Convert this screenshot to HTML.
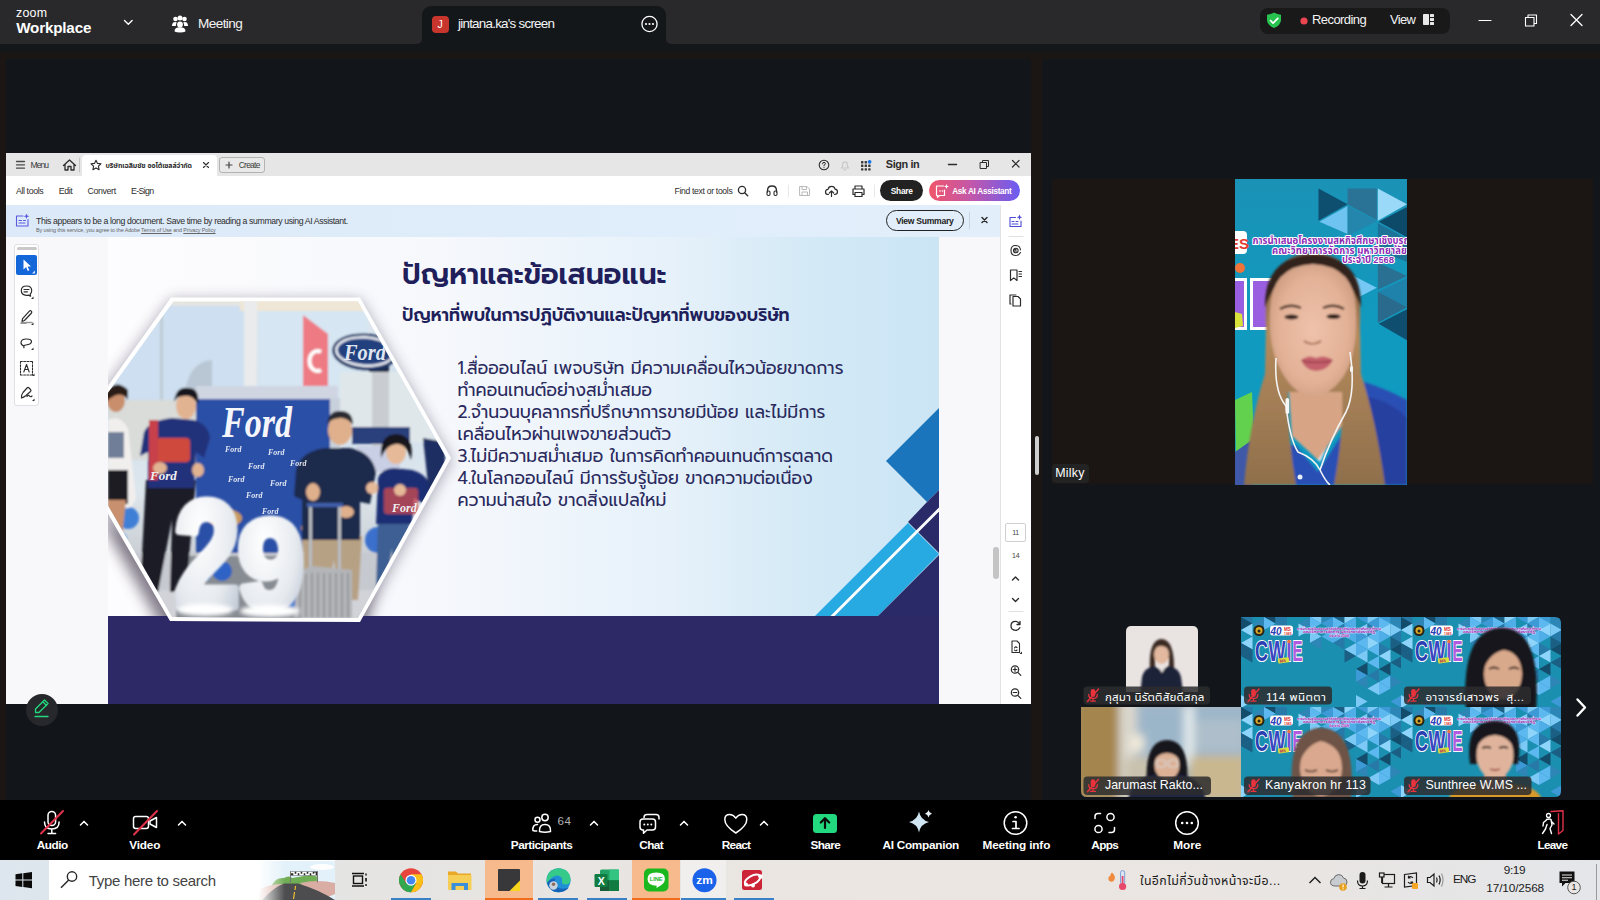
<!DOCTYPE html>
<html lang="th">
<head>
<meta charset="utf-8">
<title>Zoom Workplace</title>
<style>
*{box-sizing:border-box;margin:0;padding:0}
html,body{width:1600px;height:900px;overflow:hidden;background:#12161a}
body{position:relative;font-family:"Liberation Sans","Noto Sans Thai","Loma",sans-serif;color:#fff}
.abs{position:absolute}
.t{position:absolute;white-space:pre;line-height:1}
svg{position:absolute;overflow:visible}
#titlebar{left:0;top:0;width:1600px;height:44px;background:#29292b}
#band{left:0;top:44px;width:1600px;height:16px;background:linear-gradient(#14171a 0,#14171a 7.500px,#191613 9px,#191613 14px,#12161a 16px)}
#frameL{left:0;top:54px;width:6px;height:746px;background:#1b1613}
#frameM{left:1031px;top:54px;width:11px;height:746px;background:#1b1613}
#tab{left:422px;top:6px;width:244px;height:38px;background:#14171a;border-radius:9px 9px 0 0}
#pill{left:1260px;top:8px;width:190px;height:25.500px;background:#19191a;border-radius:8px}
#tile{left:1052px;top:179px;width:541px;height:304.500px;background:#1b1613}
#ztool{left:0;top:800px;width:1600px;height:60px;background:#000}
#taskbar{left:0;top:860px;width:1600px;height:40px;background:linear-gradient(90deg,#dde6ee 0,#e6e4e2 25%,#ebe6e1 55%,#e9e5e2 80%,#e4e6ea 100%)}
#acro{left:6px;top:153px;width:1025px;height:551px;background:#f8f7fa;overflow:hidden;color:#2c2c2c}
#acro .tabrow{left:0;top:0;width:1025px;height:23px;background:#e6e6e6}
#acro .toolrow{left:0;top:23px;width:1025px;height:29px;background:#fff}
#acro .banner{left:0;top:52px;width:994px;height:32px;background:linear-gradient(90deg,#dce9f8,#e2effb)}
#acro .rail{left:994px;top:52px;width:31px;height:499px;background:#fff;border-left:1px solid #e3e3e3}
</style>
</head>
<body>
<div id="titlebar" class="abs"></div>
<div id="band" class="abs"></div>
<div id="frameL" class="abs"></div>
<div id="frameM" class="abs"></div>
<div id="tab" class="abs"></div>
<div id="pill" class="abs"></div>
<div id="tile" class="abs"></div>
<div id="acro" class="abs">
  <div class="abs tabrow"></div>
  <div class="abs toolrow"></div>
  <div class="abs banner"></div>
  <div class="abs rail"></div>
</div>
<svg class="abs" style="left:108px;top:237px" width="831" height="467" viewBox="108 237 831 467">
<defs>
<linearGradient id="sbg" x1="0" x2="1" y1="0" y2="0"><stop offset="0" stop-color="#fdfcfe"/><stop offset=".4" stop-color="#f6f8fc"/><stop offset=".68" stop-color="#e6f1fa"/><stop offset=".85" stop-color="#d3e9f6"/><stop offset="1" stop-color="#cbe5f5"/></linearGradient>
<linearGradient id="sky" x1="0" x2="0" y1="0" y2="1"><stop offset="0" stop-color="#e9e3d6"/><stop offset=".04" stop-color="#dfe6ec"/><stop offset=".3" stop-color="#cfe0ef"/><stop offset=".6" stop-color="#dde6ec"/><stop offset=".8" stop-color="#c9ced4"/><stop offset="1" stop-color="#bcbfc6"/></linearGradient>
<radialGradient id="bal" cx=".4" cy=".35" r=".8"><stop offset="0" stop-color="#ffffff"/><stop offset=".6" stop-color="#e6eaef"/><stop offset="1" stop-color="#b9c2cf"/></radialGradient>
<clipPath id="slideclip"><rect x="108" y="237" width="831" height="467"/></clipPath>
<clipPath id="hexin"><polygon points="173.500,301.500 357.800,301.500 446.400,458 357.800,618 172.300,617 72,443"/></clipPath>
<filter id="b1" x="-20%" y="-20%" width="140%" height="140%"><feGaussianBlur stdDeviation="1.1"/></filter>
<filter id="b2" x="-20%" y="-20%" width="140%" height="140%"><feGaussianBlur stdDeviation="2.2"/></filter>
<filter id="b6" x="-20%" y="-20%" width="140%" height="140%"><feGaussianBlur stdDeviation="7"/></filter>
</defs>
<g clip-path="url(#slideclip)">
<rect x="108" y="237" width="831" height="467" fill="url(#sbg)"/>
<!-- right decorations -->
<polygon points="886,461 939,408 939,490 927,502" fill="#1b75bc"/>
<polygon points="927,502 939,490 939,553 908,522" fill="#2b2a68"/>
<polygon points="815,616 908,523 939,554 878,616" fill="#27a9e1"/>
<polygon points="939,555 939,617 877,617" fill="#2b2a68"/>
<polygon points="830.500,616 939,507.500 939,511.500 834.500,616" fill="#ffffff"/>
<!-- hex shadow -->
<polygon points="171,299 360,299 452,460 361,626 168,626 62,445" fill="#3a3050" opacity=".38" filter="url(#b6)"/>
<polygon points="150,540 382,540 366,634 164,634 100,520" fill="#4a4050" opacity=".5" filter="url(#b6)"/>
<rect x="108" y="616" width="831" height="88" fill="#2c2966"/>
<polygon points="171,297.500 360,297.500 451,458 360,622 170,621 67,443" fill="#ffffff"/>
<g clip-path="url(#hexin)">
<rect x="60" y="297" width="400" height="325" fill="url(#sky)"/>
<g filter="url(#b1)">
<!-- building / windows -->
<rect x="108" y="306" width="136" height="95" fill="#cddff0"/>
<rect x="258" y="311" width="110" height="90" fill="#d6e6f2"/><rect x="240" y="297" width="130" height="14" fill="#efe6d6"/>
<rect x="244" y="300" width="13" height="110" fill="#e9ebec"/>
<rect x="160" y="300" width="3" height="100" fill="#b9c3c9" opacity=".7"/>
<rect x="108" y="400" width="90" height="60" fill="#d9dcd9"/>
<rect x="340" y="372" width="110" height="70" fill="#dfe7ea"/>
<!-- feather flag -->
<path d="M184 402 Q186 362 212 360 L212 402Z" fill="#b9c6d4"/>
<!-- red flag -->
<path d="M303 315 L328 334 L328 392 L303 390Z" fill="#ee7a84"/>
<path d="M321 352 a8 10 0 1 0 0 18" fill="none" stroke="#fff" stroke-width="4"/>
<!-- ford sign -->
<rect x="372" y="366" width="17" height="80" fill="#c9cdd2"/>
<rect x="369" y="366" width="20" height="6" fill="#1c2c4c"/><ellipse cx="365" cy="352" rx="33" ry="18.500" fill="#1e3768" transform="rotate(4 365 352)"/><ellipse cx="365" cy="351.500" rx="30" ry="15.500" fill="#eef2f8" transform="rotate(4 365 352)"/>
<ellipse cx="365" cy="351.500" rx="27.500" ry="13" fill="#213f7d" transform="rotate(4 365 352)"/>
<!-- backdrop -->
<rect x="196" y="392" width="142" height="162" fill="#2a4fa6"/>
<rect x="196" y="386" width="142" height="13" fill="#cfd6e2"/>
<rect x="330" y="398" width="10" height="60" fill="#c8d0dc"/>
<!-- floor -->
<rect x="108" y="553" width="340" height="70" fill="#c6c9cf"/>
<rect x="108" y="590" width="340" height="30" fill="#d2d3d8"/><rect x="176" y="556" width="126" height="64" fill="#878c93"/>
<!-- chairs -->
<ellipse cx="225" cy="518" rx="17" ry="9" fill="#c99a5e"/>
<ellipse cx="318" cy="528" rx="17" ry="9" fill="#c99a5e"/>
<!-- blue balloons -->
<circle cx="128" cy="518" r="11" fill="#3f7fd6"/><circle cx="118" cy="540" r="9" fill="#5b9be6"/>
<circle cx="222" cy="571" r="10" fill="#2f62c4"/><circle cx="204" cy="574" r="7" fill="#3f7fd6"/>
<circle cx="378" cy="540" r="13" fill="#3a70cc"/><circle cx="293" cy="600" r="8" fill="#3a70cc"/>
<!-- woman left -->
<path d="M108 420 q12 -6 20 8 l8 70 q-4 12 -12 10 l-6 40 l-10 -4Z" fill="#f1efee"/>
<rect x="108" y="470" width="20" height="34" fill="#1d1d24"/>
<rect x="108" y="432" width="16" height="26" fill="#6f7f97"/>
<path d="M108 500 l18 0 l-6 56 l-12 -6z" fill="#c8906e"/>
<ellipse cx="116" cy="400" rx="9" ry="12" fill="#c98e6c"/>
<path d="M106 392 q10 -14 22 -2 l0 10 q-8 -12 -22 2z" fill="#2a1b16"/>
<!-- man 1 -->
<path d="M140 592 L146 480 L196 480 L186 592 L170 592 L172 520 L158 592Z" fill="#1c1e26"/>
<path d="M144 432 q6 -12 28 -14 l22 2 q14 4 16 18 l-6 20 l-8 -6 l-2 36 l-46 0 l0 -36 l-8 4z" fill="#22307a"/>
<rect x="156" y="438" width="34" height="24" rx="4" fill="#cf4a3c"/>
<rect x="149" y="420" width="9" height="60" fill="#c8404a"/>
<ellipse cx="186" cy="406" rx="10" ry="13" fill="#e2b391"/>
<path d="M174 402 q2 -16 14 -14 q12 0 10 16 q-6 -10 -14 -8 q-8 0 -10 6z" fill="#15131a"/>
<ellipse cx="160" cy="468" rx="7" ry="6" fill="#e2b391"/><ellipse cx="198" cy="470" rx="6" ry="7" fill="#e2b391"/>
<rect x="352" y="427" width="58" height="17" fill="#2a3f7c"/><rect x="356" y="446" width="44" height="26" fill="#c9cfe4"/>
<!-- man 2 -->
<path d="M300 600 L302 536 L362 536 L358 600 L338 600 L334 560 L326 600Z" fill="#b7a184"/>
<path d="M296 470 q4 -18 28 -22 l26 0 q22 4 26 24 l-6 32 l-10 -2 l0 38 l-58 0 l0 -40 l-8 -4z" fill="#1f2a4c"/>
<ellipse cx="340" cy="430" rx="12" ry="15" fill="#e0b08c"/>
<path d="M327 424 q2 -14 14 -13 q12 0 12 14 q-6 -8 -13 -7 q-8 0 -13 6z" fill="#2a2a30"/>
<ellipse cx="313" cy="492" rx="7" ry="9" fill="#e0b08c"/><ellipse cx="346" cy="512" rx="8" ry="6" fill="#e0b08c"/>
<!-- woman right -->
<path d="M376 590 L378 520 L410 520 L404 590 L394 590 L392 548 L386 590Z" fill="#3c5f93"/>
<path d="M378 478 q4 -10 16 -10 l18 2 q16 4 20 20 l-8 14 l-10 -6 l-2 26 l-36 0z" fill="#1f2f73"/>
<rect x="384" y="488" width="34" height="26" rx="3" fill="#c74a52" opacity=".8"/>
<ellipse cx="396" cy="452" rx="10" ry="12" fill="#e6b999"/>
<path d="M381 458 q-2 -24 16 -24 q18 2 14 26 q-4 -16 -14 -16 q-10 0 -16 14z" fill="#15131a"/>
<ellipse cx="372" cy="488" rx="6" ry="6" fill="#e6b999"/><ellipse cx="400" cy="490" rx="6" ry="6" fill="#e6b999"/>
<!-- dark vertical at right of woman -->
<path d="M423 438 l22 4 l0 42 l-16 10z" fill="#1e2e62"/>
<!-- suitcase -->
<rect x="309" y="505" width="3" height="64" fill="#b8bcc2"/><rect x="338" y="505" width="3" height="64" fill="#b8bcc2"/><rect x="307" y="503" width="36" height="4" fill="#3f5fa8"/>
<path d="M297 572 L312 566 L352 570 L352 618 L294 618Z" fill="#b4b5b8"/>
<path d="M300 575v42M306 574v44M312 573v45M318 573v45M324 573v45M330 573v45M336 573v45M342 573v45M348 573v45" stroke="#8f9196" stroke-width="1.600" fill="none"/>
</g>
<!-- balloon numbers as real text -->
<g filter="url(#b1)" font-family="'Liberation Sans',sans-serif" font-weight="700" font-size="150" fill="url(#bal)" stroke="url(#bal)" stroke-width="9" stroke-linejoin="round" stroke-linecap="round">
<text x="174" y="606" textLength="66" lengthAdjust="spacingAndGlyphs">2</text>
<text x="238" y="607" textLength="66" lengthAdjust="spacingAndGlyphs" font-size="124">9</text>
</g>
<g filter="url(#b2)" fill="#fff"><ellipse cx="205" cy="610" rx="28" ry="6"/><ellipse cx="270" cy="611" rx="30" ry="6"/></g>
<!-- Ford logos text -->
<g font-family="'Liberation Serif',serif" font-style="italic" font-weight="700" fill="#f4f6fb">
<text x="222" y="437" font-size="44" textLength="70" lengthAdjust="spacingAndGlyphs">Ford</text>
<text x="344" y="360" font-size="24" textLength="42" lengthAdjust="spacingAndGlyphs" fill="#dfe5f0">Ford</text>
<g font-size="8" opacity=".9"><text x="225" y="452">Ford</text><text x="268" y="455">Ford</text><text x="248" y="469">Ford</text><text x="290" y="466">Ford</text><text x="228" y="482">Ford</text><text x="270" y="486">Ford</text><text x="246" y="498">Ford</text><text x="262" y="514">Ford</text></g>
<text x="150" y="480" font-size="13" fill="#f0f0f4">Ford</text>
<text x="392" y="512" font-size="12" fill="#f0f0f4">Ford</text>
</g>
</g>
<!-- slide text -->
<g font-family="'Prompt','Liberation Sans','Kanit','Noto Sans Thai','Loma',sans-serif" fill="#22215c">
<text x="402" y="283.500" font-size="28.500" font-weight="600" fill="#201f5b">ปัญหาและข้อเสนอแนะ</text>
<text x="402" y="320.500" font-size="17.340" font-weight="600" fill="#201f5b">ปัญหาที่พบในการปฏิบัติงานและปัญหาที่พบของบริษัท</text>
<g font-size="17.300" fill="#2a2a5e">
<text x="457.500" y="373.500">1.สื่อออนไลน์ เพจบริษัท มีความเคลื่อนไหวน้อยขาดการ</text>
<text x="457.500" y="395.500">ทำคอนเทนต์อย่างสม่ำเสมอ</text>
<text x="457.500" y="417.500">2.จำนวนบุคลากรที่ปรึกษาการขายมีน้อย และไม่มีการ</text>
<text x="457.500" y="439.500">เคลื่อนไหวผ่านเพจขายส่วนตัว</text>
<text x="457.500" y="461.500">3.ไม่มีความสม่ำเสมอ ในการคิดทำคอนเทนต์การตลาด</text>
<text x="457.500" y="483.500">4.ในโลกออนไลน์ มีการรับรู้น้อย ขาดความต่อเนื่อง</text>
<text x="457.500" y="505.500">ความน่าสนใจ ขาดสิ่งแปลใหม่</text>
</g>
</g>
</g>
</svg>

<!-- acrobat chrome: coordinates are absolute page coords via svg at 0,0 -->
<div class="abs" style="left:82px;top:155px;width:135px;height:21px;background:#fff;border-radius:4px 4px 0 0"></div>
<div class="abs" style="left:219px;top:157px;width:46px;height:16px;border:1px solid #b3b3b3;border-radius:3px;background:#e9e9e9"></div>
<div class="abs" style="left:880px;top:180px;width:43px;height:21px;border-radius:11px;background:#222"></div>
<div class="abs" style="left:929px;top:180px;width:91px;height:21px;border-radius:11px;background:linear-gradient(90deg,#f0566a 0,#c457a8 45%,#6a5cf2 100%)"></div>
<div class="abs" style="left:886px;top:210px;width:78px;height:21px;border-radius:11px;border:1.5px solid #222"></div>
<div class="abs" style="left:14px;top:244px;width:25px;height:162px;border:1px solid #e1dfe4;border-radius:3px;background:#fff"></div>
<div class="abs" style="left:17px;top:247px;width:20px;height:3px;border-radius:2px;background:#c9c9c9"></div>
<div class="abs" style="left:16px;top:255px;width:21px;height:20px;border-radius:2px;background:#1467d9"></div>
<div class="abs" style="left:993px;top:547px;width:6px;height:32px;border-radius:3px;background:#c4c4c4"></div>
<div class="abs" style="left:1005px;top:523px;width:21px;height:19px;border:1px solid #cfcfcf;border-radius:2px;background:#fff"></div>
<div class="abs" style="left:1035px;top:436px;width:4px;height:39px;border-radius:2px;background:#cfcfcf"></div>
<svg class="abs" style="left:0;top:0" width="1600" height="900" viewBox="0 0 1600 900" fill="none" stroke="#2c2c2c" stroke-width="1.200" stroke-linecap="round" stroke-linejoin="round">
<!-- hamburger -->
<path d="M16.500 161.500h8M16.500 164.800h8M16.500 168.200h8" stroke="#4a4a4a" stroke-width="1.300"/>
<!-- home -->
<path d="M63.500 165.500 L69.500 160 L75.500 165.500 M65 164.500 V170 H68 V166.500 H71 V170 H74 V164.500" stroke-width="1.300"/>
<path d="M79.500 158v14" stroke="#c4c4c4" stroke-width="1"/>
<!-- star -->
<path d="M96 160.200l1.500 3.200 3.500.4-2.600 2.400.7 3.500-3.100-1.800-3.100 1.800.7-3.500-2.600-2.400 3.500-.4z" stroke-width="1.100"/>
<!-- tab close -->
<path d="M203.500 162.500l5 5M208.500 162.500l-5 5" stroke-width="1.100"/>
<!-- plus -->
<path d="M226 165h6M229 162v6" stroke="#444" stroke-width="1.200"/>
<!-- help -->
<circle cx="824" cy="165" r="4.800" stroke-width="1.100"/><path d="M822.600 163.800q0-1.500 1.400-1.500t1.400 1.400q0 .9-1.400 1.500v.6M824 167.600v.2" stroke-width="1"/>
<!-- bell (disabled) -->
<path d="M841.500 168q1.200-1 1.200-3.500 0-2.700 2.300-2.700t2.300 2.700q0 2.500 1.200 3.500zM844 169.600q1 .8 2 0" stroke="#c8c8c8"/>
<!-- grid -->
<g fill="#3a3a3a" stroke="none"><rect x="861" y="161" width="2.400" height="2.400" rx=".5"/><rect x="864.600" y="161" width="2.400" height="2.400" rx=".5"/><rect x="861" y="164.600" width="2.400" height="2.400" rx=".5"/><rect x="864.600" y="164.600" width="2.400" height="2.400" rx=".5"/><rect x="868.200" y="164.600" width="2.400" height="2.400" rx=".5"/><rect x="861" y="168.200" width="2.400" height="2.400" rx=".5"/><rect x="864.600" y="168.200" width="2.400" height="2.400" rx=".5"/><rect x="868.200" y="168.200" width="2.400" height="2.400" rx=".5"/><circle cx="869.600" cy="161.800" r="1.900" fill="#1473e6"/></g>
<!-- window controls -->
<path d="M948.500 164.500h8" stroke-width="1.500"/>
<path d="M980.500 162.500h6v6h-6zM982.500 162.500v-2h6v6h-2" stroke-width="1"/>
<path d="M1012.500 160.500l6.500 6.500M1019 160.500l-6.500 6.500" stroke-width="1.200"/>
<!-- search -->
<circle cx="742" cy="190" r="3.600" stroke-width="1.300"/><path d="M744.700 192.700l3 3" stroke-width="1.400"/>
<!-- headphones -->
<path d="M767.500 192v-1.500q0-4.500 4.500-4.500t4.500 4.500v1.500" stroke-width="1.300"/><rect x="767" y="191" width="3" height="4.500" rx="1.200" stroke-width="1.100"/><rect x="774" y="191" width="3" height="4.500" rx="1.200" stroke-width="1.100"/>
<path d="M788.500 185v12M874.500 185v12" stroke="#e8e8e8" stroke-width="1"/>
<!-- save (disabled) -->
<path d="M800 186.500h7l2.500 2.500v6.500h-9.500zM802 186.500v3h4.500v-3M802 195.500v-3.500h5.500v3.500" stroke="#b9b9b9" stroke-width="1"/>
<!-- cloud upload -->
<path d="M828.500 194.500q-3 0-3-2.600 0-2.400 2.500-2.600.6-3 3.600-3 2.800 0 3.400 2.800 2.500.3 2.500 2.700 0 2.700-3 2.700M831.500 196.500v-5.500M829.300 193l2.200-2.200 2.200 2.200" stroke-width="1.200"/>
<!-- print -->
<path d="M855 189v-3h7v3M855 194.500h-2v-5.500h11v5.500h-2M855 192.500h7v4h-7z" stroke-width="1.200"/>
<!-- AI assistant icon in button -->
<path d="M937 186h6.500M944.500 190v5.500h-5l-2 1.800v-1.800h-1v-9.500" stroke="#fff" stroke-width="1.200"/><path d="M946.500 184l.7 1.800 1.800.7-1.800.7-.7 1.800-.7-1.800-1.800-.7 1.800-.7z" fill="#fff" stroke="none"/><circle cx="940" cy="191" r=".8" fill="#fff" stroke="none"/><circle cx="942.500" cy="191" r=".8" fill="#fff" stroke="none"/>
<!-- banner icon -->
<g stroke="#5b5be0" stroke-width="1.100"><path d="M17 216h6M28 219.500v6.500h-11.500v-10M19 220.500h2.500M19 223h6M23.500 220.500h2"/><path d="M26.500 213.500l.8 2 2 .8-2 .8-.8 2-.8-2-2-.8 2-.8z" fill="#5b5be0" stroke="none"/></g>
<!-- banner separator and close -->
<path d="M969.500 212v17" stroke="#c9d4e0" stroke-width="1"/>
<path d="M982 217.500l5 5M987 217.500l-5 5" stroke-width="1.500"/>
<!-- left tools -->
<path d="M23.500 259.500v10l2.600-2.400 1.700 3.800 1.500-.7-1.700-3.700h3.400z" fill="#fff" stroke="none"/><path d="M35 270.500v3h-3z" fill="#fff" stroke="none" opacity=".85"/>
<path d="M26.500 286q5.200 0 5.200 4.600 0 2.300-1.500 3.500l.4 2-2.300-1q-.9.200-1.800.2-5.200 0-5.200-4.700 0-4.600 5.200-4.600zM24 289.500h5M24 291.800h3.500" stroke-width="1.200"/>
<path d="M22 321.500l2.500-1 7-7.500q.8-1-.2-1.900t-1.900.1l-6.800 7.500zM21 323h5" stroke-width="1.200"/><path d="M26 322.500h6" stroke="#999" stroke-width="1.600"/>
<path d="M24 346q-3-1-3-3.300 0-3.700 5.500-3.700 5 0 5 2.600 0 2.900-5.600 3.400-2.900.3-1.900 2.800" stroke-width="1.200"/>
<path d="M20.500 361.500h12M20.500 375h12M20.500 361.500v13.500M32.500 361.500v13.500" stroke-dasharray="1.800 1.400" stroke-width="1.100"/><path d="M23.800 372l2.700-7.500 2.700 7.500M24.800 369.500h3.400" stroke-width="1.100"/>
<path d="M21.500 398q-.5-3 1.500-5.500l4-4.500q1-1 2 0l1.500 1.500q1 1 0 2l-4.500 4q-2.500 2-4.500 2.500zM27 396.500q1.500-2 2.500-.5t2.500 0" stroke-width="1.200"/>
<g fill="#2c2c2c" stroke="none"><path d="M33.500 296.500v2.500h-2.500zM33.500 322.500v2.500h-2.500zM33.500 347.500v2.500h-2.500zM34.500 373.500v2.500h-2.500zM34.500 398.500v2.500h-2.500z"/></g>
<!-- right rail icons -->
<g stroke="#4b4bd8" stroke-width="1.100"><path d="M1010 217.500h5.500M1021 221v5.500h-11v-9M1012 221.500h2M1012 224h6M1016 221.500h2"/><path d="M1019.500 214.500l.8 1.900 1.900.8-1.900.8-.8 1.900-.8-1.900-1.900-.8 1.900-.8z" fill="#4b4bd8" stroke="none"/></g>
<path d="M1009 236.500h14M1009 611.500h14" stroke="#e0e0e0" stroke-width="1"/>
<path d="M1020.500 252.500q-1.500 3-5 3-4.500 0-4.500-5t4.500-5q4.500 0 5 4.500M1013.500 250.500q0-2.300 2.300-2.300t2.300 2.300-2.300 2.300-2.300-2.300M1016 249.500h-1v1.500h1.500" stroke-width="1.100"/>
<path d="M1010.500 270h6.500v10.500l-3.200-2.600-3.300 2.600zM1019 271.500h2.500M1019 274h2.500M1019 276.500h2.500" stroke-width="1.200"/>
<path d="M1013 296.500h5l2.500 2.500v7h-7.500zM1011 304h-1v-9h6" stroke-width="1.200"/>
<path d="M1012.500 580l3-3 3 3M1012.500 598.500l3 3 3-3" stroke-width="1.400"/>
<path d="M1020 621.500v3h-3M1019.800 624.300q-1.500-3-4.300-3-4.500 0-4.500 4.500t4.500 4.500q3 0 4.300-2.600" stroke-width="1.300"/>
<path d="M1012 641h5l2.500 2.500v9h-7.500zM1014.500 648q1-2 2.500-.5M1017 650q-1.500 1.500-2.500 0" stroke-width="1.100"/><path d="M1022 651.500v2.500h-2.500z" fill="#2c2c2c" stroke="none"/>
<circle cx="1015" cy="669.500" r="3.700" stroke-width="1.200"/><path d="M1017.800 672.300l3 3M1013.200 669.500h3.600M1015 667.700v3.600" stroke-width="1.200"/>
<circle cx="1015" cy="692.500" r="3.700" stroke-width="1.200"/><path d="M1017.800 695.300l3 3M1013.200 692.500h3.600" stroke-width="1.200"/>
</svg>

<svg class="abs" style="left:1235px;top:179px" width="172" height="306" viewBox="1235 179 172 306">
<defs>
<clipPath id="spclip"><rect x="1235" y="179" width="172" height="306"/></clipPath>
<linearGradient id="spbg" x1="0" x2="0" y1="0" y2="1"><stop offset="0" stop-color="#1a92b6"/><stop offset=".5" stop-color="#119abf"/><stop offset="1" stop-color="#0d9ac2"/></linearGradient>
<linearGradient id="hairL" x1="0" x2="0" y1="0" y2="1"><stop offset="0" stop-color="#6b4a34"/><stop offset=".35" stop-color="#b48a5c"/><stop offset="1" stop-color="#8f6f4c"/></linearGradient>
<radialGradient id="face" cx=".5" cy=".5" r=".62"><stop offset="0" stop-color="#efc2ab"/><stop offset=".65" stop-color="#e2b196"/><stop offset="1" stop-color="#c8967a"/></radialGradient>
<filter id="sb1" x="-20%" y="-20%" width="140%" height="140%"><feGaussianBlur stdDeviation="1.200"/></filter>
<filter id="sb3" x="-20%" y="-20%" width="140%" height="140%"><feGaussianBlur stdDeviation="3"/></filter>
</defs>
<g clip-path="url(#spclip)">
<rect x="1235" y="179" width="172" height="306" fill="url(#spbg)"/>
<!-- triangle pattern top right -->
<g>
<polygon points="1318.500,188.600 1347.600,204.200 1318.500,220.700" fill="#0e4f70"/>
<polygon points="1319.400,221.700 1347.600,206.100 1347.600,234" fill="#6ec3f0"/>
<polygon points="1347.600,188.600 1376.800,188.600 1376.800,220 1347.600,204.500" fill="#2b7396"/>
<polygon points="1347.600,206 1376.800,221 1347.600,236" fill="#2485ad"/>
<polygon points="1377.800,188.600 1407,204.200 1377.800,220.700" fill="#9adaf8"/>
<polygon points="1407,207 1378.700,221.700 1407,237.200" fill="#0d4a6a"/>
<polygon points="1377.800,223 1407,239 1407,262 1377.800,250" fill="#1c7397"/>
<polygon points="1348.600,273.200 1376.800,287.800 1348.600,302.400" fill="#74c8f3"/>
<polygon points="1377.800,262.500 1407,276.100 1377.800,289.700" fill="#2a7093"/>
<polygon points="1407,278 1377.800,291.700 1407,307.200" fill="#1f82ab"/>
<polygon points="1377.800,291.700 1407,307.200 1377.800,322.800" fill="#2a6a8c"/>
<polygon points="1407,309.200 1378.700,323.700 1407,340.300" fill="#0f4e6e"/>
</g>
<!-- left partial graphics -->
<rect x="1226" y="231" width="21" height="23" rx="4" fill="#fff"/>
<circle cx="1240" cy="268" r="5" fill="#f0743a"/>
<rect x="1228" y="278" width="19" height="52" fill="#fff"/><rect x="1228" y="281" width="16" height="46" fill="#9a5fe0"/>
<rect x="1250" y="278" width="22" height="52" fill="#fff"/><rect x="1253" y="281" width="17" height="46" fill="#9a5fe0"/>
<path d="M1235 312l7 2 1 12-8 2z" fill="#d8e23a"/>
<!-- green cloth -->
<path d="M1235 400 L1252 392 L1254 440 L1236 456 Z" fill="#62d24e"/>
<path d="M1235 452 L1252 440 L1252 485 L1235 485Z" fill="#3f58a8"/>
<!-- shirt -->
<g filter="url(#sb1)">
<path d="M1358 380 Q1385 388 1407 400 L1407 485 L1262 485 L1272 440 L1296 446 L1318 472 L1346 428Z" fill="#2c50b4"/>
<path d="M1366 396 Q1392 402 1407 418 L1407 485 L1384 485Z" fill="#2840a0"/>
<path d="M1330 424 L1336 428 L1320 462 L1316 458Z" fill="#eef0f6"/>
<!-- neck / chest -->
<path d="M1288 376 L1346 376 L1346 420 L1318 460 L1292 436 Z" fill="#d7a585"/>
<!-- hair -->
<path d="M1266 326 Q1262 254 1313 253 Q1364 254 1360 326 L1361 374 Q1376 420 1385 485 L1334 485 Q1344 430 1342 392 L1288 392 Q1288 440 1296 485 L1244 485 Q1250 420 1265 374Z" fill="url(#hairL)"/>
<path d="M1265 308 Q1264 256 1313 255 Q1362 256 1361 308 Q1348 268 1313 268 Q1278 268 1265 308Z" fill="#33241d"/>
<!-- face -->
<path d="M1270 310 Q1271 266 1313 264 Q1355 266 1356 310 Q1358 350 1345 374 Q1331 396 1313 396 Q1296 396 1283 374 Q1268 350 1270 310Z" fill="url(#face)"/>
<!-- brows / eyes -->
<path d="M1280 309q10-6 21-1" stroke="#4a3328" stroke-width="2.400" fill="none"/><path d="M1323 308q11-5 21 1" stroke="#4a3328" stroke-width="2.400" fill="none"/>
<ellipse cx="1291.500" cy="317" rx="7" ry="2.600" fill="#33221c"/><ellipse cx="1333.500" cy="316.500" rx="7" ry="2.600" fill="#33221c"/>
<!-- nose -->
<path d="M1304 341q8 6 17 0" stroke="#b07c62" stroke-width="2.200" fill="none"/>
<!-- lips -->
<path d="M1301 360q8-6 15-2 8-4 17 2-6 11-17 11-10 0-15-11z" fill="#c4606c"/>
<path d="M1302 361q15 3 30 0" stroke="#9c3f4c" stroke-width="1.300" fill="none"/>
</g>
<!-- earphone wires -->
<path d="M1276 358 Q1274 392 1286 406 Q1290 440 1298 452 Q1314 458 1320 470 Q1326 482 1330 485" stroke="#f4f4f4" stroke-width="1.600" fill="none"/>
<path d="M1350 352 Q1356 392 1346 412 Q1330 440 1320 470" stroke="#f4f4f4" stroke-width="1.600" fill="none"/>
<rect x="1285.500" y="398" width="3.600" height="16" rx="1.800" fill="#f7f7f7"/>
<rect x="1350" y="366" width="3" height="6" rx="1.500" fill="#f4f4f4"/>
<circle cx="1300" cy="477" r="2.500" fill="#e8eef8"/>
<!-- banner thai text -->
<g font-family="'Liberation Sans','Noto Sans Thai','Loma',sans-serif" font-weight="700" font-size="9.600" fill="#8e2bb4" stroke="#fff" stroke-width="2" paint-order="stroke" stroke-linejoin="round">
<text x="1252.500" y="243.500" textLength="160" lengthAdjust="spacing">การนำเสนอโครงงานสหกิจศึกษาเชิงบูรณ</text>
<text x="1272" y="253.500" textLength="140" lengthAdjust="spacing">คณะวิทยาการจัดการ  มหาวิทยาลัยร</text>
<text x="1342" y="263.300" textLength="52" lengthAdjust="spacing">ประจำปี 2568</text>
</g>
<text x="1229" y="249" font-family="'Liberation Sans',sans-serif" font-weight="700" font-size="15" fill="#e23a2e">ES</text>
</g>
</svg>
<div class="abs" style="left:1052px;top:464px;width:37px;height:19px;border-radius:4px;background:rgba(38,38,40,.85)"></div>

<svg class="abs" style="left:0;top:0" width="1600" height="900" viewBox="0 0 1600 900" font-family="'Liberation Sans','Noto Sans Thai','Loma',sans-serif">
<defs><clipPath id="cwclip"><rect width="160" height="90"/></clipPath><g id="cwbg" clip-path="url(#cwclip)"><rect width="160" height="90" fill="#1a8fb0"/><polygon points="11.5,-6.5 0,0 11.5,6.5" fill="#2779a8"/><polygon points="0,0 11.5,6.5 0,13" fill="#144d6b"/><polygon points="11.5,6.5 0,13 11.5,19.5" fill="#8fd4fa"/><polygon points="11.5,19.5 0,26 11.5,32.5" fill="#8fd4fa"/><polygon points="0,26 11.5,32.5 0,39" fill="#1b5f84"/><polygon points="11.5,32.5 0,39 11.5,45.5" fill="#1b5f84"/><polygon points="0,78 11.5,84.5 0,91" fill="#8fd4fa"/><polygon points="23,0 11.5,6.5 23,13" fill="#2e86b6"/><polygon points="34.5,-6.5 23,0 34.5,6.5" fill="#144d6b"/><polygon points="23,0 34.5,6.5 23,13" fill="#5db8f0"/><polygon points="23,78 34.5,84.5 23,91" fill="#2e86b6"/><polygon points="34.5,-6.5 46,0 34.5,6.5" fill="#2779a8"/><polygon points="46,0 34.5,6.5 46,13" fill="#2779a8"/><polygon points="69,0 57.5,6.5 69,13" fill="#2e86b6"/><polygon points="57.5,6.5 69,13 57.5,19.5" fill="#8fd4fa"/><polygon points="80.5,-6.5 69,0 80.5,6.5" fill="#7cc9f6"/><polygon points="69,0 80.5,6.5 69,13" fill="#5db8f0"/><polygon points="69,13 80.5,19.5 69,26" fill="#7cc9f6"/><polygon points="80.5,19.5 69,26 80.5,32.5" fill="#2e86b6"/><polygon points="80.5,-6.5 92,0 80.5,6.5" fill="#2e86b6"/><polygon points="92,0 80.5,6.5 92,13" fill="#3d9ad6"/><polygon points="92,13 80.5,19.5 92,26" fill="#4faee8"/><polygon points="103.5,-6.5 92,0 103.5,6.5" fill="#1b5f84"/><polygon points="92,0 103.5,6.5 92,13" fill="#5db8f0"/><polygon points="103.5,6.5 92,13 103.5,19.5" fill="#2779a8"/><polygon points="92,13 103.5,19.5 92,26" fill="#4faee8"/><polygon points="103.5,19.5 92,26 103.5,32.5" fill="#2779a8"/><polygon points="103.5,-6.5 115,0 103.5,6.5" fill="#8fd4fa"/><polygon points="115,0 103.5,6.5 115,13" fill="#4faee8"/><polygon points="103.5,6.5 115,13 103.5,19.5" fill="#4faee8"/><polygon points="115,13 103.5,19.5 115,26" fill="#4faee8"/><polygon points="115,26 103.5,32.5 115,39" fill="#7cc9f6"/><polygon points="103.5,32.5 115,39 103.5,45.5" fill="#1b5f84"/><polygon points="126.5,-6.5 115,0 126.5,6.5" fill="#3d9ad6"/><polygon points="126.5,6.5 115,13 126.5,19.5" fill="#7cc9f6"/><polygon points="115,13 126.5,19.5 115,26" fill="#3d9ad6"/><polygon points="126.5,19.5 115,26 126.5,32.5" fill="#5db8f0"/><polygon points="115,26 126.5,32.5 115,39" fill="#4faee8"/><polygon points="126.5,32.5 115,39 126.5,45.5" fill="#7cc9f6"/><polygon points="126.5,45.5 115,52 126.5,58.5" fill="#144d6b"/><polygon points="115,52 126.5,58.5 115,65" fill="#3d9ad6"/><polygon points="126.5,58.5 115,65 126.5,71.5" fill="#2e86b6"/><polygon points="115,78 126.5,84.5 115,91" fill="#7cc9f6"/><polygon points="126.5,-6.5 138,0 126.5,6.5" fill="#7cc9f6"/><polygon points="138,0 126.5,6.5 138,13" fill="#3d9ad6"/><polygon points="126.5,6.5 138,13 126.5,19.5" fill="#2779a8"/><polygon points="138,13 126.5,19.5 138,26" fill="#5db8f0"/><polygon points="126.5,19.5 138,26 126.5,32.5" fill="#8fd4fa"/><polygon points="138,26 126.5,32.5 138,39" fill="#5db8f0"/><polygon points="138,39 126.5,45.5 138,52" fill="#5db8f0"/><polygon points="138,52 126.5,58.5 138,65" fill="#2779a8"/><polygon points="138,65 126.5,71.5 138,78" fill="#7cc9f6"/><polygon points="149.5,-6.5 138,0 149.5,6.5" fill="#3d9ad6"/><polygon points="138,0 149.5,6.5 138,13" fill="#5db8f0"/><polygon points="149.5,6.5 138,13 149.5,19.5" fill="#8fd4fa"/><polygon points="138,13 149.5,19.5 138,26" fill="#4faee8"/><polygon points="138,26 149.5,32.5 138,39" fill="#2779a8"/><polygon points="149.5,32.5 138,39 149.5,45.5" fill="#8fd4fa"/><polygon points="149.5,45.5 138,52 149.5,58.5" fill="#144d6b"/><polygon points="149.5,58.5 138,65 149.5,71.5" fill="#5db8f0"/><polygon points="138,65 149.5,71.5 138,78" fill="#5db8f0"/><polygon points="149.5,-6.5 161,0 149.5,6.5" fill="#2e86b6"/><polygon points="161,0 149.5,6.5 161,13" fill="#2e86b6"/><polygon points="149.5,6.5 161,13 149.5,19.5" fill="#7cc9f6"/><polygon points="161,13 149.5,19.5 161,26" fill="#2779a8"/><polygon points="149.5,19.5 161,26 149.5,32.5" fill="#1b5f84"/><polygon points="161,26 149.5,32.5 161,39" fill="#144d6b"/><polygon points="161,39 149.5,45.5 161,52" fill="#1b5f84"/><polygon points="149.5,58.5 161,65 149.5,71.5" fill="#2e86b6"/><polygon points="161,78 149.5,84.5 161,91" fill="#3d9ad6"/></g>
<clipPath id="galclip"><path d="M1241 617H1555q6 0 6 6V791q0 6-6 6H1087q-6 0-6-6V707H1241z"/></clipPath>
<clipPath id="tA"><path d="M1126 692V631.500q0-5.500 5.500-5.500H1192.500q5.500 0 5.500 5.500V692z"/></clipPath>
<clipPath id="tD"><rect x="1081" y="707" width="160" height="90"/></clipPath>
<clipPath id="tC"><rect x="1401" y="617" width="160" height="90"/></clipPath>
<clipPath id="tE"><rect x="1241" y="707" width="160" height="90"/></clipPath>
<clipPath id="tF"><rect x="1401" y="707" width="160" height="90"/></clipPath>
<filter id="gb1" x="-20%" y="-20%" width="140%" height="140%"><feGaussianBlur stdDeviation=".9"/></filter>
<filter id="gb4" x="-20%" y="-20%" width="140%" height="140%"><feGaussianBlur stdDeviation="4.500"/></filter>
<linearGradient id="lbl" x1="0" x2="0" y1="0" y2="1"><stop offset="0" stop-color="#2e2e30"/><stop offset="1" stop-color="#2a2a2c"/></linearGradient>
</defs>
<g clip-path="url(#tA)"><rect x="1126" y="626" width="72" height="81" fill="#e9e4e2"/><g filter="url(#gb1)"><path d="M1150 672q-2-32 11-33 14 0 13 33l-5 0 0-14-14 0 0 14z" fill="#3a2a24"/><ellipse cx="1161.500" cy="654.500" rx="7.500" ry="9.500" fill="#e2b89e"/><path d="M1153 650q2-9 9-8 8 0 8 9-4-5-9-5-5 0-8 4z" fill="#3a2a24"/><path d="M1139 707l3-30q2-9 12-11l7 4 8-4q10 2 12 11l4 30z" fill="#1e2238"/><path d="M1158 666l4 7 4-7z" fill="#e9e4e2"/></g></g>
<g clip-path="url(#tD)"><rect x="1081" y="707" width="160" height="90" fill="#aeb9c0"/><g filter="url(#gb4)"><rect x="1075" y="700" width="44" height="100" fill="#a4854e"/><rect x="1119" y="700" width="18" height="100" fill="#d9d6cc"/><rect x="1137" y="706" width="110" height="48" fill="#9cb6c9"/><rect x="1184" y="706" width="10" height="60" fill="#e2eaec"/><rect x="1194" y="720" width="50" height="30" fill="#aebfcb"/><rect x="1190" y="756" width="56" height="44" fill="#c9b78f"/><rect x="1125" y="758" width="30" height="40" fill="#c9c2ae"/><rect x="1130" y="735" width="14" height="16" fill="#efe9da"/></g><g filter="url(#gb1)"><path d="M1147 790q-4-50 20-50 24 0 20 50z" fill="#17161c"/><ellipse cx="1167" cy="765" rx="12.500" ry="15" fill="#dcb196"/><path d="M1153 762q0-18 14-18 15 0 14 18-5-9-14-9-9 0-14 9z" fill="#17161c"/><rect x="1156.500" y="760" width="9" height="7" rx="2.500" fill="none" stroke="#d8d8d8" stroke-width="1.100"/><rect x="1168.500" y="760" width="9" height="7" rx="2.500" fill="none" stroke="#d8d8d8" stroke-width="1.100"/><path d="M1128 800q4-22 26-25l13 6 13-6q22 3 26 25z" fill="#232845"/></g></g>
<use href="#cwbg" x="1241" y="617"/>
<circle cx="1259" cy="630.5" r="5.500" fill="#2a2418"/><circle cx="1259" cy="630.5" r="3.500" fill="#d9a928"/><circle cx="1259" cy="631" r="1.500" fill="#2a2418"/><rect x="1270" y="625.5" width="23" height="10" rx="3" fill="#fff"/><text x="1270.5" y="634.5" font-size="10" font-weight="700" font-style="italic" fill="#2b3fb8">40</text><text x="1284" y="630.5" font-size="4.600" font-weight="700" fill="#e0312c">MS</text><text x="1284" y="634.5" font-size="3.400" font-weight="700" fill="#e0312c">1985</text><g font-size="3.600" font-weight="700" fill="#8e2bb4" stroke="#f4e8ff" stroke-width=".7" paint-order="stroke"><text x="1297" y="629.5" textLength="84" lengthAdjust="spacingAndGlyphs">การนำเสนอโครงงานสหกิจศึกษาเชิงบูรณาการกับการทำงาน</text><text x="1303" y="633" textLength="72" lengthAdjust="spacingAndGlyphs">คณะวิทยาการจัดการ  มหาวิทยาลัยราชภัฏ</text><text x="1329" y="636.5" textLength="20" lengthAdjust="spacingAndGlyphs">ประจำปี 2568</text></g><g font-size="30" font-weight="700" stroke="#fff" stroke-width="2.200" paint-order="stroke" stroke-linejoin="round"><text x="1255" y="661" textLength="13" lengthAdjust="spacingAndGlyphs" fill="#2a3fb2">C</text><text x="1268.5" y="661" textLength="17" lengthAdjust="spacingAndGlyphs" fill="#3a46c0">W</text><text x="1286.5" y="661" textLength="5" lengthAdjust="spacingAndGlyphs" fill="#7a4ed4">I</text><text x="1292.5" y="661" textLength="10" lengthAdjust="spacingAndGlyphs" fill="#b25ae0">E</text></g><circle cx="1289" cy="641.5" r="1.800" fill="#f0743a"/><rect x="1278" y="658" width="11" height="5" rx="1" fill="#d8e23a" transform="rotate(-8 1283 660)"/><text x="1279.5" y="662.2" font-size="4.200" font-weight="700" fill="#b0206a" transform="rotate(-8 1283 660)">MS</text>
<use href="#cwbg" x="1401" y="617"/>
<circle cx="1419" cy="630.5" r="5.500" fill="#2a2418"/><circle cx="1419" cy="630.5" r="3.500" fill="#d9a928"/><circle cx="1419" cy="631" r="1.500" fill="#2a2418"/><rect x="1430" y="625.5" width="23" height="10" rx="3" fill="#fff"/><text x="1430.5" y="634.5" font-size="10" font-weight="700" font-style="italic" fill="#2b3fb8">40</text><text x="1444" y="630.5" font-size="4.600" font-weight="700" fill="#e0312c">MS</text><text x="1444" y="634.5" font-size="3.400" font-weight="700" fill="#e0312c">1985</text><g font-size="3.600" font-weight="700" fill="#8e2bb4" stroke="#f4e8ff" stroke-width=".7" paint-order="stroke"><text x="1457" y="629.5" textLength="84" lengthAdjust="spacingAndGlyphs">การนำเสนอโครงงานสหกิจศึกษาเชิงบูรณาการกับการทำงาน</text><text x="1463" y="633" textLength="72" lengthAdjust="spacingAndGlyphs">คณะวิทยาการจัดการ  มหาวิทยาลัยราชภัฏ</text><text x="1489" y="636.5" textLength="20" lengthAdjust="spacingAndGlyphs">ประจำปี 2568</text></g><g font-size="30" font-weight="700" stroke="#fff" stroke-width="2.200" paint-order="stroke" stroke-linejoin="round"><text x="1415" y="661" textLength="13" lengthAdjust="spacingAndGlyphs" fill="#2a3fb2">C</text><text x="1428.5" y="661" textLength="17" lengthAdjust="spacingAndGlyphs" fill="#3a46c0">W</text><text x="1446.5" y="661" textLength="5" lengthAdjust="spacingAndGlyphs" fill="#7a4ed4">I</text><text x="1452.5" y="661" textLength="10" lengthAdjust="spacingAndGlyphs" fill="#b25ae0">E</text></g><circle cx="1449" cy="641.5" r="1.800" fill="#f0743a"/><rect x="1438" y="658" width="11" height="5" rx="1" fill="#d8e23a" transform="rotate(-8 1443 660)"/><text x="1439.5" y="662.2" font-size="4.200" font-weight="700" fill="#b0206a" transform="rotate(-8 1443 660)">MS</text>
<use href="#cwbg" x="1241" y="707"/>
<circle cx="1259" cy="720.5" r="5.500" fill="#2a2418"/><circle cx="1259" cy="720.5" r="3.500" fill="#d9a928"/><circle cx="1259" cy="721" r="1.500" fill="#2a2418"/><rect x="1270" y="715.5" width="23" height="10" rx="3" fill="#fff"/><text x="1270.5" y="724.5" font-size="10" font-weight="700" font-style="italic" fill="#2b3fb8">40</text><text x="1284" y="720.5" font-size="4.600" font-weight="700" fill="#e0312c">MS</text><text x="1284" y="724.5" font-size="3.400" font-weight="700" fill="#e0312c">1985</text><g font-size="3.600" font-weight="700" fill="#8e2bb4" stroke="#f4e8ff" stroke-width=".7" paint-order="stroke"><text x="1297" y="719.5" textLength="84" lengthAdjust="spacingAndGlyphs">การนำเสนอโครงงานสหกิจศึกษาเชิงบูรณาการกับการทำงาน</text><text x="1303" y="723" textLength="72" lengthAdjust="spacingAndGlyphs">คณะวิทยาการจัดการ  มหาวิทยาลัยราชภัฏ</text><text x="1329" y="726.5" textLength="20" lengthAdjust="spacingAndGlyphs">ประจำปี 2568</text></g><g font-size="30" font-weight="700" stroke="#fff" stroke-width="2.200" paint-order="stroke" stroke-linejoin="round"><text x="1255" y="751" textLength="13" lengthAdjust="spacingAndGlyphs" fill="#2a3fb2">C</text><text x="1268.5" y="751" textLength="17" lengthAdjust="spacingAndGlyphs" fill="#3a46c0">W</text><text x="1286.5" y="751" textLength="5" lengthAdjust="spacingAndGlyphs" fill="#7a4ed4">I</text><text x="1292.5" y="751" textLength="10" lengthAdjust="spacingAndGlyphs" fill="#b25ae0">E</text></g><circle cx="1289" cy="731.5" r="1.800" fill="#f0743a"/><rect x="1278" y="748" width="11" height="5" rx="1" fill="#d8e23a" transform="rotate(-8 1283 750)"/><text x="1279.5" y="752.2" font-size="4.200" font-weight="700" fill="#b0206a" transform="rotate(-8 1283 750)">MS</text>
<use href="#cwbg" x="1401" y="707"/>
<circle cx="1419" cy="720.5" r="5.500" fill="#2a2418"/><circle cx="1419" cy="720.5" r="3.500" fill="#d9a928"/><circle cx="1419" cy="721" r="1.500" fill="#2a2418"/><rect x="1430" y="715.5" width="23" height="10" rx="3" fill="#fff"/><text x="1430.5" y="724.5" font-size="10" font-weight="700" font-style="italic" fill="#2b3fb8">40</text><text x="1444" y="720.5" font-size="4.600" font-weight="700" fill="#e0312c">MS</text><text x="1444" y="724.5" font-size="3.400" font-weight="700" fill="#e0312c">1985</text><g font-size="3.600" font-weight="700" fill="#8e2bb4" stroke="#f4e8ff" stroke-width=".7" paint-order="stroke"><text x="1457" y="719.5" textLength="84" lengthAdjust="spacingAndGlyphs">การนำเสนอโครงงานสหกิจศึกษาเชิงบูรณาการกับการทำงาน</text><text x="1463" y="723" textLength="72" lengthAdjust="spacingAndGlyphs">คณะวิทยาการจัดการ  มหาวิทยาลัยราชภัฏ</text><text x="1489" y="726.5" textLength="20" lengthAdjust="spacingAndGlyphs">ประจำปี 2568</text></g><g font-size="30" font-weight="700" stroke="#fff" stroke-width="2.200" paint-order="stroke" stroke-linejoin="round"><text x="1415" y="751" textLength="13" lengthAdjust="spacingAndGlyphs" fill="#2a3fb2">C</text><text x="1428.5" y="751" textLength="17" lengthAdjust="spacingAndGlyphs" fill="#3a46c0">W</text><text x="1446.5" y="751" textLength="5" lengthAdjust="spacingAndGlyphs" fill="#7a4ed4">I</text><text x="1452.5" y="751" textLength="10" lengthAdjust="spacingAndGlyphs" fill="#b25ae0">E</text></g><circle cx="1449" cy="731.5" r="1.800" fill="#f0743a"/><rect x="1438" y="748" width="11" height="5" rx="1" fill="#d8e23a" transform="rotate(-8 1443 750)"/><text x="1439.5" y="752.2" font-size="4.200" font-weight="700" fill="#b0206a" transform="rotate(-8 1443 750)">MS</text>
<g clip-path="url(#tC)" filter="url(#gb1)"><path d="M1466 712q-6-84 36-84 40 0 34 84z" fill="#15141a"/><ellipse cx="1503" cy="674" rx="19" ry="25" fill="#d9a98c"/><path d="M1482 672q-2-34 22-36 24 0 20 38-4-22-20-24-14 2-22 22z" fill="#15141a"/><path d="M1489 669q5-3 10 0M1509 669q5-3 10 0" stroke="#2a1c18" stroke-width="2" fill="none"/></g>
<g clip-path="url(#tE)" filter="url(#gb1)"><path d="M1293 800q-8-72 28-72 36 0 30 72z" fill="#6e5246"/><ellipse cx="1321" cy="768" rx="21" ry="28" fill="#d9a88e"/><path d="M1298 766q-2-36 23-37 26 0 24 38-6-22-24-26-16 4-23 25z" fill="#6e5246"/><path d="M1305 770q6 3 12 0M1326 770q6 3 12 0" stroke="#4a3028" stroke-width="1.600" fill="none"/></g>
<g clip-path="url(#tF)" filter="url(#gb1)"><path d="M1448 800q4-14 30-16l34 0q26 2 30 16z" fill="#d99a2b"/><rect x="1484" y="770" width="22" height="20" fill="#d4a084"/><path d="M1470 764q-6-43 25-43 30 0 23 43z" fill="#17161c"/><ellipse cx="1495" cy="755" rx="18.500" ry="24" fill="#e0b49c"/><path d="M1475 750q0-27 20-27 21 0 20 27-6-14-20-15-14 1-20 15z" fill="#17161c"/><path d="M1482 748q5-2 9 0M1499 748q5-2 9 0" stroke="#2a1c18" stroke-width="1.800" fill="none"/><path d="M1490 769q5 2 10 0" stroke="#a04848" stroke-width="1.800" fill="none"/></g>
<path d="M1555 617h6v6q0-6-6-6zM1561 791v6h-6q6 0 6-6zM1081 791v6h6q-6 0-6-6z" fill="#12161a"/>
<rect x="1083.5" y="686.5" width="126.5" height="18" rx="4" fill="#2c2c2e" opacity=".86"/><g stroke="#e8323c" fill="none" stroke-width="1.300" stroke-linecap="round"><rect x="1090.7" y="689" width="4.600" height="8" rx="2.300" fill="#e8323c" stroke="none"/><path d="M1088.7 694.5q0 4 4.300 4t4.300-4M1093 698.7v2.200M1090.5 701.1h5"/><path d="M1087.5 701.5L1098.5 689" stroke-width="1.500"/></g>
<rect x="1244" y="686.5" width="88" height="18" rx="4" fill="#2c2c2e" opacity=".86"/><g stroke="#e8323c" fill="none" stroke-width="1.300" stroke-linecap="round"><rect x="1251.2" y="689" width="4.600" height="8" rx="2.300" fill="#e8323c" stroke="none"/><path d="M1249.2 694.5q0 4 4.300 4t4.300-4M1253.5 698.7v2.200M1251 701.1h5"/><path d="M1248 701.5L1259 689" stroke-width="1.500"/></g>
<rect x="1404" y="686.5" width="127" height="18" rx="4" fill="#2c2c2e" opacity=".86"/><g stroke="#e8323c" fill="none" stroke-width="1.300" stroke-linecap="round"><rect x="1411.2" y="689" width="4.600" height="8" rx="2.300" fill="#e8323c" stroke="none"/><path d="M1409.2 694.5q0 4 4.300 4t4.300-4M1413.5 698.7v2.200M1411 701.1h5"/><path d="M1408 701.5L1419 689" stroke-width="1.500"/></g>
<rect x="1083.5" y="776.5" width="127.5" height="18.5" rx="4" fill="#2c2c2e" opacity=".86"/><g stroke="#e8323c" fill="none" stroke-width="1.300" stroke-linecap="round"><rect x="1090.7" y="779.25" width="4.600" height="8" rx="2.300" fill="#e8323c" stroke="none"/><path d="M1088.7 784.75q0 4 4.300 4t4.300-4M1093 788.95v2.200M1090.5 791.35h5"/><path d="M1087.5 791.75L1098.5 779.25" stroke-width="1.500"/></g>
<rect x="1244" y="776.5" width="126.5" height="18.5" rx="4" fill="#2c2c2e" opacity=".86"/><g stroke="#e8323c" fill="none" stroke-width="1.300" stroke-linecap="round"><rect x="1251.2" y="779.25" width="4.600" height="8" rx="2.300" fill="#e8323c" stroke="none"/><path d="M1249.2 784.75q0 4 4.300 4t4.300-4M1253.5 788.95v2.200M1251 791.35h5"/><path d="M1248 791.75L1259 779.25" stroke-width="1.500"/></g>
<rect x="1404" y="776.5" width="127.5" height="18.5" rx="4" fill="#2c2c2e" opacity=".86"/><g stroke="#e8323c" fill="none" stroke-width="1.300" stroke-linecap="round"><rect x="1411.2" y="779.25" width="4.600" height="8" rx="2.300" fill="#e8323c" stroke="none"/><path d="M1409.2 784.75q0 4 4.300 4t4.300-4M1413.5 788.95v2.200M1411 791.35h5"/><path d="M1408 791.75L1419 779.25" stroke-width="1.500"/></g>
<path d="M1577.500 699.500l7.500 8-7.500 8" stroke="#fff" stroke-width="2.400" fill="none" stroke-linecap="round" stroke-linejoin="round"/>
</svg>

<div id="ztool" class="abs"></div>
<div id="taskbar" class="abs"></div>
<div class="abs" style="left:432px;top:16px;width:17px;height:17px;border-radius:4px;background:#c8352c"></div>
<div class="abs" style="left:26px;top:694px;width:32px;height:32px;border-radius:16px;background:#27282b"></div>
<div class="abs" style="left:813px;top:813.500px;width:24px;height:19px;border-radius:3.500px;background:#22d97f"></div>
<svg class="abs" style="left:0;top:0" width="1600" height="900" viewBox="0 0 1600 900" fill="none" stroke="#fff" stroke-width="1.500" stroke-linecap="round" stroke-linejoin="round">
<!-- title bar -->
<path d="M416 44q6 0 6-6v6zM672 44q-6 0-6-6v6z" fill="#14171a" stroke="none"/>
<path d="M124.500 20.500l3.800 3.800 3.800-3.800" stroke-width="1.400"/>
<g fill="#fff" stroke="none"><circle cx="175.500" cy="19" r="2.300"/><circle cx="180" cy="18" r="2.500"/><circle cx="184.500" cy="19" r="2.300"/><circle cx="180" cy="24.500" r="2.900"/><path d="M172 26q0-4 3.200-4 1.200 0 1.600.5-1 1.400-1 3.500zM188 26q0-4-3.200-4-1.200 0-1.600.5 1 1.400 1 3.500zM174.500 31.500q0-4.200 5.500-4.200t5.500 4.200q-2 1-5.500 1t-5.500-1z"/></g>
<circle cx="649.500" cy="24" r="7.600" stroke-width="1.300"/><g fill="#fff" stroke="none"><circle cx="646" cy="24" r="1.100"/><circle cx="649.500" cy="24" r="1.100"/><circle cx="653" cy="24" r="1.100"/></g>
<path d="M1274 12.500q3.500 2 7 2.200v5.300q0 5-7 8-7-3-7-8v-5.300q3.500-.2 7-2.200z" fill="#27c24f" stroke="none"/><path d="M1270.500 20.500l2.600 2.600 4.700-4.800" stroke="#fff" stroke-width="1.700"/>
<circle cx="1304" cy="21" r="3.600" fill="#ea4550" stroke="none"/>
<g fill="#e8e8e8" stroke="none"><rect x="1423" y="14" width="6" height="11" rx=".8"/><rect x="1430" y="14" width="4" height="3" rx=".5"/><rect x="1430" y="18" width="4" height="3" rx=".5"/><rect x="1430" y="22" width="4" height="3" rx=".5"/></g>
<path d="M1479 20.500h12" stroke-width="1.200"/>
<path d="M1525.500 17.500h8.500v8.500h-8.500zM1528 17.500v-2.500h8.500v8.500h-2.500" stroke-width="1.100"/>
<path d="M1571 14.500l11 11M1582 14.500l-11 11" stroke-width="1.300"/>
<!-- annotate pen -->
<g stroke="#22d97f" stroke-width="1.300"><path d="M35.500 712.500v-3.500l9-9 3.500 3.500-9 9zM43 702l3.500 3.500M35 716.500h13"/></g>
<!-- toolbar: mic -->
<rect x="48" y="811.500" width="7.600" height="14" rx="3.800" stroke-width="1.500"/><path d="M44.500 822q0 7 7.300 7t7.300-7M51.800 829v4M48 833.500h7.600"/>
<path d="M41 833.500L63 811" stroke="#e0324b" stroke-width="2"/>
<path d="M80.500 825l3.500-3.600 3.500 3.600M178.500 825l3.500-3.600 3.500 3.600M590.500 825l3.500-3.600 3.500 3.600M680.500 825l3.500-3.600 3.500 3.600M760.500 825l3.500-3.600 3.500 3.600" stroke-width="1.500"/>
<!-- video -->
<rect x="133.500" y="816.500" width="15" height="12" rx="2.200"/><path d="M150 821l6.500-3.500v10l-6.500-3.500z"/>
<path d="M134 834.500L157 811" stroke="#e0324b" stroke-width="2"/>
<!-- participants -->
<circle cx="545" cy="817.500" r="3.200"/><circle cx="537.500" cy="819.800" r="2.500"/><path d="M539.500 831.500q-.5-7 5.500-7t5.500 7q-5.500 1.600-11 0zM537.500 824.500q-5.200 0-4.600 6 1.800.6 3.800.6"/>
<!-- chat -->
<path d="M644 817.500q0-3 3-3h9q3 0 3 3v1.500"/><path d="M643 819h9.500q3 0 3 3v5q0 3-3 3h-5.500l-3.500 3.200v-3.200h-.5q-3 0-3-3v-5q0-3 3-3z"/><g fill="#fff" stroke="none"><circle cx="644.300" cy="824.600" r="1"/><circle cx="647.800" cy="824.600" r="1"/><circle cx="651.300" cy="824.600" r="1"/></g>
<!-- react heart -->
<path d="M735.800 833q-11-7-11-13.500 0-5 4.800-5 3.600 0 6.200 3.600 2.600-3.600 6.200-3.600 4.800 0 4.800 5 0 6.500-11 13.500z"/>
<!-- share arrow -->
<path d="M825 828v-9.500M820.800 822.500l4.200-4.300 4.200 4.300" stroke="#0a0a0a" stroke-width="2.200"/>
<!-- AI companion sparkle -->
<path d="M919 811.500q1.500 8.500 10 10.500-8.500 2-10 10.500-1.500-8.500-10-10.500 8.500-2 10-10.500z" fill="#cfe6f2" stroke="none"/><path d="M928.500 810q.6 3 3.500 3.700-2.900.7-3.500 3.700-.6-3-3.500-3.700 2.900-.7 3.500-3.700z" fill="#e8f2f8" stroke="none"/>
<!-- meeting info -->
<circle cx="1015.500" cy="823" r="11.300"/><path d="M1013 821.500h3v6.500M1012.500 828.500h6.500" stroke-width="1.700"/><circle cx="1015.600" cy="817.200" r="1.300" fill="#fff" stroke="none"/>
<!-- apps -->
<path d="M1095 818.500v-2q0-3 3-3h2.500M1114.500 827.500v2q0 3-3 3h-2.500"/><circle cx="1110.500" cy="817" r="3.600"/><circle cx="1098.500" cy="829" r="3.600"/>
<!-- more -->
<circle cx="1187" cy="823" r="11.300"/><g fill="#fff" stroke="none"><circle cx="1182.200" cy="823" r="1.300"/><circle cx="1187" cy="823" r="1.300"/><circle cx="1191.800" cy="823" r="1.300"/></g>
<!-- leave -->
<path d="M1551 811.500l12-.8v19.800l-4.500 3.500V813.800" stroke="#e0324b" stroke-width="1.400"/>
<circle cx="1548.500" cy="815.500" r="2" stroke-width="1.300"/><path d="M1546.500 819.500q3-1 4.500 0l1 5.500-2 3.500 1.500 5M1547 824.500l-1.500 4.500-3 4.500M1546.500 820l-3 2.500-.5 3.500M1551.500 821.500l2.500 2.500" stroke-width="1.400"/>
</svg>

<div class="abs" style="left:48.500px;top:860px;width:286.500px;height:40px;background:#fff"></div>
<div class="abs" style="left:485px;top:860px;width:47.500px;height:40px;background:#f7ba8c;border-bottom:2.500px solid #ee6c1c"></div>
<div class="abs" style="left:632px;top:860px;width:47.500px;height:40px;background:#f7ba8c;border-bottom:2.500px solid #ee6c1c"></div>
<div class="abs" style="left:681px;top:860px;width:45px;height:40px;background:#f1efee"></div>
<div class="abs" style="left:391px;top:897.500px;width:40px;height:2.500px;background:#3a80c6"></div>
<div class="abs" style="left:538px;top:897.500px;width:40px;height:2.500px;background:#3a80c6"></div>
<div class="abs" style="left:587px;top:897.500px;width:40px;height:2.500px;background:#3a80c6"></div>
<div class="abs" style="left:681px;top:897.500px;width:45px;height:2.500px;background:#3a80c6"></div>
<div class="abs" style="left:734px;top:897.500px;width:40px;height:2.500px;background:#3a80c6"></div>
<div class="abs" style="left:1595.500px;top:864px;width:1px;height:36px;background:#9a9a9a"></div>
<svg class="abs" style="left:0;top:0" width="1600" height="900" viewBox="0 0 1600 900" font-family="'Liberation Sans',sans-serif">
<defs><clipPath id="roadclip"><rect x="258" y="861" width="77" height="39"/></clipPath>
<linearGradient id="rdfade" x1="0" x2="1" y1="0" y2="0"><stop offset="0" stop-color="#fff" stop-opacity="1"/><stop offset=".35" stop-color="#fff" stop-opacity="0"/></linearGradient>
<filter id="tb1"><feGaussianBlur stdDeviation=".600"/></filter></defs>
<!-- windows logo -->
<path d="M15.500 874.300l6.800-1v6.300h-6.800zM23.300 873.200l8.700-1.200v7.600h-8.700zM15.500 880.600h6.800v6.300l-6.800-1zM23.300 880.600h8.700v7.600l-8.700-1.200z" fill="#0a0a0a"/>
<!-- search glass -->
<circle cx="72" cy="876.500" r="4.700" fill="none" stroke="#2a2a2a" stroke-width="1.400"/><path d="M68.700 880l-7.700 7.800" stroke="#2a2a2a" stroke-width="1.500"/>
<!-- road picture -->
<g clip-path="url(#roadclip)"><g filter="url(#tb1)">
<rect x="258" y="861" width="77" height="39" fill="#e3f1fa"/>
<ellipse cx="322" cy="867" rx="12" ry="3" fill="#fff"/>
<path d="M272 885q4-8 12-7 5-3 8 0l12-2q8-2 14 1l0 8-46 2z" fill="#6fae55"/>
<path d="M258 900l2-11q10-5 24-5l0 16z" fill="#dcb0a8"/>
<path d="M300 883q18-4 35 0v11l-14 6z" fill="#d9ada4"/>
<path d="M262 900q12-13 22-16.500h14q20 6 37 16.500z" fill="#4d4d50"/>
<path d="M295.500 886l-.5 4M294.500 892l-1 7" stroke="#f0c030" stroke-width="1.200"/>
<rect x="290" y="871.500" width="28" height="4" fill="#2a2a2a"/><path d="M291 872.500h3v2h3v-2h3v2h3v-2h3v2h3v-2h3v2h3v-2" stroke="#fff" stroke-width="1.400" fill="none"/>
<path d="M290.500 871.500v11M317.500 871.500v11" stroke="#777" stroke-width="1"/>
</g><rect x="258" y="861" width="77" height="39" fill="url(#rdfade)"/></g>
<!-- task view -->
<g fill="none" stroke="#111" stroke-width="1.400"><rect x="353.500" y="876" width="9" height="7.500"/><path d="M352 873.500h12M352 886h12"/><path d="M366 873.500v2M366 886v-2" /><rect x="365.200" y="878" width="1.600" height="3.500" fill="#111" stroke="none"/></g>
<!-- chrome -->
<circle cx="411" cy="880.200" r="12" fill="#e8453c"/>
<path d="M411 880.200L400.600 886.200A12 12 0 0 0 411 892.200L417 881.800z" fill="#2da94f"/>
<path d="M411 880.200L421.400 886.200A12 12 0 0 0 421.400 874.200H411z" fill="#fbc116"/>
<path d="M411 892.200A12 12 0 0 0 421.400 886.200L416.200 883.200z" fill="#fbc116"/>
<path d="M400.600 886.200A12 12 0 0 1 400.600 874.200L406 883z" fill="#2da94f"/>
<circle cx="411" cy="880.200" r="5.500" fill="#fff"/><circle cx="411" cy="880.200" r="4.300" fill="#4286f5"/>
<!-- explorer -->
<path d="M448 871.500h8l2 2h13v5h-23z" fill="#e9a825"/><rect x="448" y="875" width="23.500" height="15" rx="1" fill="#f7ce55"/><path d="M451.500 890v-7h16.500v7h-4v-4h-8.500v4z" fill="#3b8fd8"/>
<!-- sticky notes -->
<rect x="498" y="869" width="22" height="22" rx="1" fill="#38383a"/><path d="M520 880.500v10.500h-10.500z" fill="#f7d51d"/>
<!-- edge -->
<circle cx="558.500" cy="880.200" r="12" fill="#1f8fd6"/><path d="M547 884q-2-14 11-15.800 12 .5 12.500 11.300 0 5-5 5-4 0-3.500-3.500 1-4-4-5.500-7 0-11 8.500z" fill="#35c98a"/><path d="M547 883q3 9.500 12 9.200 7-.5 10-5-8 3.500-13-1-3-3.500-.5-7.500-6 0-8.500 4.300z" fill="#1763b8"/><circle cx="553.500" cy="885.500" r="4.200" fill="#c9d3de"/><circle cx="553.500" cy="884.300" r="1.700" fill="#8a6a5a"/>
<!-- excel -->
<rect x="600" y="869.500" width="19" height="21.500" rx="1.500" fill="#21a366"/><rect x="609.500" y="869.500" width="9.500" height="10.700" fill="#33c481"/><rect x="600" y="880.200" width="9.500" height="10.800" fill="#185c37"/><rect x="609.500" y="880.200" width="9.500" height="10.800" fill="#107c41"/><rect x="594.500" y="874" width="13" height="13" rx="1.200" fill="#107c41"/>
<text x="597.700" y="884.800" font-size="10.500" font-weight="700" fill="#fff">X</text>
<!-- line -->
<rect x="644" y="868.500" width="24.500" height="23" rx="5" fill="#1bb71f"/><path d="M656.200 872.500q8.700 0 8.700 6.400 0 4.200-5.500 7.300l-3 1.800.3-2.200q-9.200-.6-9.200-6.900 0-6.400 8.700-6.400z" fill="#fff"/>
<text x="649.700" y="881.300" font-size="5.200" font-weight="700" fill="#1bb71f" textLength="13" lengthAdjust="spacingAndGlyphs">LINE</text>
<!-- zoom -->
<circle cx="704.500" cy="880.200" r="12" fill="#1a62ea"/><text x="696.300" y="884.300" font-size="11.500" font-weight="700" fill="#fff" textLength="16.500" lengthAdjust="spacingAndGlyphs">zm</text>
<!-- red app -->
<rect x="742" y="870" width="20" height="20" rx="2.500" fill="#cc2336"/><ellipse cx="752.500" cy="880" rx="8.500" ry="4.200" transform="rotate(-28 752.500 880)" fill="none" stroke="#fff" stroke-width="2"/><g fill="#fff"><circle cx="746" cy="884.500" r="2"/><circle cx="753" cy="885.500" r="2"/><circle cx="760.500" cy="876.500" r="2.300"/></g>
<!-- weather -->
<path d="M1112 872.500q4 3.500 2.500 7-1.300 2.800-4 2-2.700-1-2-4 .5-1.300 1.800-1.800 0-1.800 1.700-3.200z" fill="#f08a3c"/>
<rect x="1120.500" y="870.500" width="4.200" height="14" rx="2.100" fill="#d9e4f2" stroke="#6b8fd0" stroke-width=".8"/><circle cx="1122.600" cy="886.500" r="3.600" fill="#e8486a"/><rect x="1121.700" y="876" width="1.800" height="9" fill="#e8486a"/>
<!-- tray chevron -->
<path d="M1309.500 883l5.500-5.500 5.500 5.500" stroke="#1c1c1c" stroke-width="1.400" fill="none"/>
<!-- cloud w/ warning -->
<path d="M1335 886q-4.500 0-4.500-3.700 0-3.200 3.300-3.700 1-4 5-4 3.700 0 4.700 3.500 3.500.3 3.500 3.900 0 4-4 4z" fill="#c8ccd0" stroke="#6a6a6a" stroke-width="1"/><circle cx="1343" cy="887" r="3.800" fill="#e8a020"/><rect x="1342.500" y="884.500" width="1.100" height="3" fill="#fff"/><rect x="1342.500" y="888.300" width="1.100" height="1.100" fill="#fff"/>
<!-- mic -->
<rect x="1359.500" y="872" width="6" height="11.500" rx="3" fill="#1c1c1c"/><path d="M1357.500 880.500q0 5.500 5 5.500t5-5.500M1362.500 886v2.500M1359.500 888.500h6" stroke="#1c1c1c" stroke-width="1.200" fill="none"/>
<!-- network -->
<g fill="none" stroke="#1c1c1c" stroke-width="1.200"><rect x="1382.500" y="874.500" width="12" height="9"/><path d="M1388.500 883.500v3M1384.500 887h8"/><rect x="1379.500" y="873" width="4.500" height="4" fill="#e8e5e2"/><path d="M1381.700 877v5.500h1"/></g>
<!-- sync -->
<g fill="none" stroke="#1c1c1c" stroke-width="1.200"><path d="M1404.500 874.500l12-1.500v12.500l-12 1.500z"/><path d="M1413 878q-2-2.500-4.500-.5M1408 882q2 2.500 4.500.5M1408.500 875.800v2h2M1412.500 884v-2h-2"/></g><rect x="1412" y="883" width="6" height="6" rx="1.200" fill="#f5a623"/>
<!-- volume -->
<g fill="none" stroke="#1c1c1c" stroke-width="1.200"><path d="M1427.500 877.500h2.500l4-3.500v12l-4-3.500h-2.500z"/><path d="M1436.500 877.500q1.300 2.500 0 5M1439 875.500q2.300 4.500 0 9" /><path d="M1441.500 873.500q3 6.500 0 13" stroke="#9a9a9a"/></g>
<!-- notification -->
<path d="M1559.500 871.500h15v11.500h-9l-3.500 3.500v-3.500h-2.500z" fill="#111"/><path d="M1562 875h10M1562 877.700h10M1562 880.300h6" stroke="#e9e5e2" stroke-width="1.100"/>
<circle cx="1574" cy="887.500" r="6.300" fill="#e9e5e2" stroke="#555" stroke-width="1"/>
</svg>

<span class="t" style="left:30.5px;top:160.52px;font-size:8.6px;color:#3a3a3a;letter-spacing:-1.000px;">Menu</span>
<span class="t" style="left:105.5px;top:161.67px;font-size:7px;font-weight:700;color:#2c2c2c;font-family:'Liberation Sans','Noto Sans Thai','Loma',sans-serif;letter-spacing:-0.117px;">บริษัทเฉลิมชัย ออโต้เซลล์จำกัด</span>
<span class="t" style="left:238.8px;top:160.69px;font-size:8.4px;color:#3a3a3a;letter-spacing:-0.723px;">Create</span>
<span class="t" style="left:885.8px;top:159.37px;font-size:10.9px;font-weight:700;color:#2c2c2c;letter-spacing:-0.387px;">Sign in</span>
<span class="t" style="left:16px;top:187.15px;font-size:8.8px;color:#2c2c2c;letter-spacing:-0.401px;">All tools</span>
<span class="t" style="left:58.8px;top:187.15px;font-size:8.8px;color:#2c2c2c;letter-spacing:-0.443px;">Edit</span>
<span class="t" style="left:87.4px;top:187.15px;font-size:8.8px;color:#2c2c2c;letter-spacing:-0.345px;">Convert</span>
<span class="t" style="left:131.1px;top:187.15px;font-size:8.8px;color:#2c2c2c;letter-spacing:-0.684px;">E-Sign</span>
<span class="t" style="left:674.5px;top:187.32px;font-size:8.6px;color:#2c2c2c;letter-spacing:-0.313px;">Find text or tools</span>
<span class="t" style="left:890.8px;top:187.49px;font-size:8.4px;font-weight:700;color:#fff;letter-spacing:-0.296px;">Share</span>
<span class="t" style="left:952.2px;top:187.66px;font-size:8.2px;font-weight:700;color:#fff;letter-spacing:-0.295px;">Ask AI Assistant</span>
<span class="t" style="left:36px;top:216.74px;font-size:8.7px;color:#2c2c2c;letter-spacing:-0.366px;">This appears to be a long document. Save time by reading a summary using AI Assistant.</span>
<span class="t" style="left:36px;top:227.93px;font-size:5.4px;color:#666;letter-spacing:-0.091px;">By using this service, you agree to the Adobe <u>Terms of Use</u> and <u>Privacy Policy</u></span>
<span class="t" style="left:895.9px;top:216.62px;font-size:8.6px;font-weight:700;color:#222;letter-spacing:-0.282px;">View Summary</span>
<span class="t" style="left:1012.3px;top:529.37px;font-size:7px;color:#444;letter-spacing:-0.341px;">11</span>
<span class="t" style="left:1012px;top:551.67px;font-size:7px;color:#444;letter-spacing:-0.248px;">14</span>
<span class="t" style="left:16px;top:6.90px;font-size:12.4px;color:#fff;letter-spacing:0.222px;">zoom</span>
<span class="t" style="left:16.2px;top:19.93px;font-size:15.2px;font-weight:700;color:#fff;letter-spacing:-0.170px;">Workplace</span>
<span class="t" style="left:198px;top:17.09px;font-size:13.6px;color:#f2f2f2;letter-spacing:-0.596px;">Meeting</span>
<span class="t" style="left:437.6px;top:19.11px;font-size:10.5px;color:#fff;">J</span>
<span class="t" style="left:458px;top:17.26px;font-size:13.4px;color:#f5f5f5;letter-spacing:-0.753px;">jintana.ka's screen</span>
<span class="t" style="left:1312px;top:13.40px;font-size:13px;color:#f2f2f2;letter-spacing:-0.563px;">Recording</span>
<span class="t" style="left:1390px;top:13.40px;font-size:13px;color:#f2f2f2;letter-spacing:-0.688px;">View</span>
<span class="t" style="left:1055.3px;top:467.30px;font-size:12.4px;color:#fff;letter-spacing:0.216px;">Milky</span>
<span class="t" style="left:1104.9px;top:690.58px;font-size:11.6px;color:#fff;font-family:'Liberation Sans','Noto Sans Thai UI','Noto Sans Thai','Loma',sans-serif;letter-spacing:0.178px;">กุสุมา นิรัตติสัยดีสกุล</span>
<span class="t" style="left:1265.9px;top:690.58px;font-size:11.6px;color:#fff;font-family:'Liberation Sans','Noto Sans Thai UI','Noto Sans Thai','Loma',sans-serif;letter-spacing:0.457px;">114 พนิตตา</span>
<span class="t" style="left:1425.5px;top:690.58px;font-size:11.6px;color:#fff;font-family:'Liberation Sans','Noto Sans Thai UI','Noto Sans Thai','Loma',sans-serif;letter-spacing:0.405px;">อาจารย์เสาวพร  สุ...</span>
<span class="t" style="left:1104.9px;top:779.30px;font-size:12.4px;color:#fff;letter-spacing:0.059px;">Jarumast Rakto...</span>
<span class="t" style="left:1264.9px;top:779.30px;font-size:12.4px;color:#fff;letter-spacing:0.275px;">Kanyakron hr 113</span>
<span class="t" style="left:1425.5px;top:779.30px;font-size:12.4px;color:#fff;letter-spacing:0.056px;">Sunthree W.MS ...</span>
<span class="t" style="left:36.8px;top:840.21px;font-size:11.8px;font-weight:700;color:#fff;letter-spacing:-0.504px;">Audio</span>
<span class="t" style="left:129.3px;top:840.21px;font-size:11.8px;font-weight:700;color:#fff;letter-spacing:-0.201px;">Video</span>
<span class="t" style="left:557.5px;top:814.58px;font-size:11.6px;color:#b4b4b4;letter-spacing:0.497px;">64</span>
<span class="t" style="left:510.8px;top:840.21px;font-size:11.8px;font-weight:700;color:#fff;letter-spacing:-0.511px;">Participants</span>
<span class="t" style="left:639.3px;top:840.21px;font-size:11.8px;font-weight:700;color:#fff;letter-spacing:-0.580px;">Chat</span>
<span class="t" style="left:721.8px;top:840.21px;font-size:11.8px;font-weight:700;color:#fff;letter-spacing:-0.748px;">React</span>
<span class="t" style="left:810.5px;top:840.21px;font-size:11.8px;font-weight:700;color:#fff;letter-spacing:-0.619px;">Share</span>
<span class="t" style="left:882.5px;top:840.21px;font-size:11.8px;font-weight:700;color:#fff;letter-spacing:-0.288px;">AI Companion</span>
<span class="t" style="left:982.5px;top:840.21px;font-size:11.8px;font-weight:700;color:#fff;letter-spacing:-0.147px;">Meeting info</span>
<span class="t" style="left:1091.3px;top:840.21px;font-size:11.8px;font-weight:700;color:#fff;letter-spacing:-0.650px;">Apps</span>
<span class="t" style="left:1173.3px;top:840.21px;font-size:11.8px;font-weight:700;color:#fff;letter-spacing:-0.072px;">More</span>
<span class="t" style="left:1537.5px;top:840.21px;font-size:11.8px;font-weight:700;color:#fff;letter-spacing:-0.751px;">Leave</span>
<span class="t" style="left:88.8px;top:872.90px;font-size:15px;color:#444;letter-spacing:-0.299px;">Type here to search</span>
<span class="t" style="left:1140px;top:875.10px;font-size:12.4px;color:#1c1c1c;font-family:'Liberation Sans','Noto Sans Thai UI','Noto Sans Thai','Loma',sans-serif;letter-spacing:0.372px;">ในอีกไม่กี่วันข้างหน้าจะมีอ...</span>
<span class="t" style="left:1453px;top:873.81px;font-size:11.8px;color:#1c1c1c;letter-spacing:-1.126px;">ENG</span>
<span class="t" style="left:1503.8px;top:865.21px;font-size:11.8px;color:#1c1c1c;letter-spacing:-0.392px;">9:19</span>
<span class="t" style="left:1486.3px;top:882.61px;font-size:11.8px;color:#1c1c1c;letter-spacing:-0.135px;">17/10/2568</span>
<span class="t" style="left:1571.6px;top:883.38px;font-size:9px;color:#222;">1</span>
</body>
</html>
